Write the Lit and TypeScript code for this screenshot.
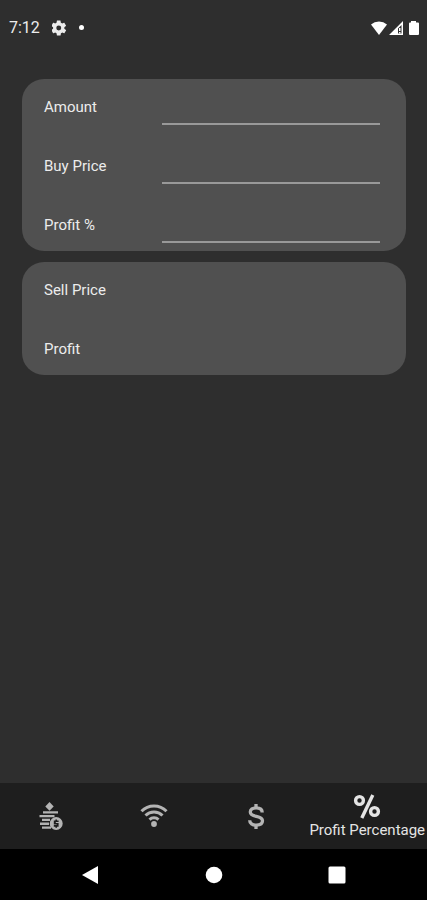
import { LitElement, html, css, svg } from "lit";
import { customElement, state } from "lit/decorators.js";

const moneyIcon = svg`
  <path d="M12.500 0l4.200 4.400-4.200 4.400-4.200-4.400z"/>
  <path d="M6 9.200h15v2.300H6zM2.500 13h15v2.300h-15zM5 16.800h8v2.300H5zM3 20.600h9v2.300H3zM5 24.400h9v2.300H5z"/>
  <path fill-rule="evenodd" d="M19.200 15a6.500 6.500 0 1 0 0 13a6.500 6.500 0 1 0 0-13zM18.400 17.400h1.600v1h1.600v1.600h-2.800v.9h2.800v3.800h-1.600v1h-1.600v-1h-1.600v-1.600h2.900v-.7h-2.900v-4h1.600z"/>`;

const wifiIcon = svg`
  <g fill="none" stroke="currentColor" stroke-width="3">
    <path d="M1.500 9.200a17.500 17.500 0 0 1 25 0"/>
    <path d="M5.500 13.500a12 12 0 0 1 17 0"/>
    <path d="M9.500 17.600a6.500 6.500 0 0 1 9 0"/>
  </g>
  <circle cx="14" cy="22" r="2.900"/>`;

const dollarIcon = svg`
  <g fill="none" stroke="currentColor" stroke-width="3.300">
    <path d="M14 2v4.500M14 22v5"/>
    <path d="M20.200 10.400c0-3-2.300-4.600-6-4.600-3.600 0-5.900 1.700-5.900 4.200 0 6 12.200 2.600 12.200 8.800 0 2.700-2.500 4.300-6.200 4.300-4 0-6.600-1.800-6.600-4.900"/>
  </g>`;

const percentIcon = svg`
  <g fill="none" stroke="currentColor" stroke-width="3.400">
    <circle cx="6.500" cy="8.500" r="3.900"/>
    <circle cx="21.500" cy="19.500" r="3.900"/>
    <path d="M19.800 3L8.800 26"/>
  </g>`;

const tabs = [
  { label: "Money", icon: moneyIcon },
  { label: "Signal", icon: wifiIcon },
  { label: "Dollar", icon: dollarIcon },
  { label: "Profit Percentage", icon: percentIcon },
];

@customElement("app-root")
export class AppRoot extends LitElement {
  @state() private active = 3;

  static styles = css`
    :host {
      display: flex;
      flex-direction: column;
      min-height: 100vh;
      background: #2e2e2e;
      color: #ececec;
      font-family: Roboto, sans-serif;
      font-size: 15px;
      line-height: 20px;
    }
    svg {
      display: block;
      fill: currentColor;
    }
    .status {
      display: flex;
      align-items: center;
      justify-content: space-between;
      height: 55px;
      padding: 0 6px 0 9px;
      font-size: 16px;
    }
    .group {
      display: flex;
      align-items: center;
    }
    .left {
      gap: 12px;
    }
    .right {
      gap: 2px;
      color: #fff;
    }
    .dot {
      width: 5px;
      height: 5px;
      border-radius: 50%;
      background: #fff;
    }
    main {
      display: flex;
      flex: 1;
      flex-direction: column;
      gap: 11px;
      padding: 24px 21px 24px 22px;
    }
    .card {
      display: flex;
      flex-direction: column;
      gap: 13px;
      padding: 0 26px 8px 22px;
      border-radius: 22px;
      background: #505050;
    }
    .row {
      display: flex;
      align-items: flex-end;
      height: 46px;
    }
    .name {
      width: 118px;
      margin-bottom: 8px;
    }
    .field {
      box-sizing: border-box;
      flex: 1;
      min-width: 0;
      height: 46px;
      padding: 10px 4px 0;
      border: 0;
      border-bottom: 2px solid #999;
      outline: 0;
      background: none;
      color: inherit;
      font: inherit;
    }
    .tabs {
      display: flex;
      height: 66px;
      background: #1e1e1e;
    }
    .tab {
      display: flex;
      flex: 1;
      flex-direction: column;
      align-items: center;
      justify-content: center;
      padding: 0;
      border: 0;
      background: none;
      color: #b4b4b4;
      font: inherit;
      white-space: nowrap;
    }
    .tab.active {
      flex: 0 0 28%;
      color: #e4e4e4;
    }
    .system {
      display: grid;
      grid-template-columns: repeat(3, 1fr);
      height: 51px;
      padding: 0 29px;
      background: #000;
    }
    .key {
      display: flex;
      align-items: center;
      justify-content: center;
      padding: 0;
      border: 0;
      background: none;
      color: #fff;
    }
  `;

  private field(id: string, label: string) {
    return html`<div class="row">
      <label class="name" for=${id}>${label}</label>
      <input class="field" id=${id} type="text" inputmode="decimal" />
    </div>`;
  }

  private result(label: string) {
    return html`<div class="row">
      <span class="name">${label}</span><output></output>
    </div>`;
  }

  render() {
    return html`
      <header class="status">
        <div class="group left">
          <span>7:12</span>
          <svg width="15" height="16" viewBox="3 2 20 20" aria-hidden="true">
            <path fill-rule="evenodd" d="M19.400 13c0-.3.100-.6.100-1s0-.7-.1-1l2.100-1.600c.2-.2.200-.4.100-.6l-2-3.500c-.1-.2-.4-.3-.6-.2l-2.500 1c-.5-.4-1.100-.7-1.700-1l-.4-2.600c0-.3-.2-.5-.4-.5h-4c-.3 0-.5.200-.5.400l-.4 2.700c-.6.300-1.200.6-1.700 1l-2.500-1c-.2-.1-.5 0-.6.200l-2 3.500c-.1.200-.1.500.1.600L4.500 11c0 .300-.1.700-.1 1s0 .700.1 1l-2.100 1.600c-.2.200-.2.400-.1.600l2 3.500c.1.200.4.300.6.200l2.500-1c.5.400 1.100.7 1.700 1l.4 2.600c0 .300.200.500.500.500h4c.2 0 .4-.2.500-.4l.4-2.700c.6-.3 1.200-.6 1.700-1l2.500 1c.2.100.5 0 .6-.2l2-3.500c.1-.2.100-.5-.1-.6zM12 15.300a3.300 3.300 0 1 1 0-6.600a3.300 3.300 0 1 1 0 6.600z"/>
          </svg>
          <span class="dot"></span>
        </div>
        <div class="group right">
          <svg width="16" height="14" viewBox="0 0 16 14" aria-hidden="true">
            <path d="M0 3.500a12 12 0 0 1 16 0L8 14z"/>
          </svg>
          <svg width="14" height="14" viewBox="0 0 14 14" aria-hidden="true">
            <path fill-rule="evenodd" d="M14 0v14H0zM12.500 4L9 7.500v5h3.500z"/>
            <path d="M10 7h1.500v3H10zM10 11h1.500v1.500H10z"/>
          </svg>
          <svg width="16" height="14" viewBox="0 0 16 14" aria-hidden="true">
            <path d="M6 0h5v1.500h2a1 1 0 0 1 1 1V13a1 1 0 0 1-1 1H5a1 1 0 0 1-1-1V2.500a1 1 0 0 1 1-1h1z"/>
          </svg>
        </div>
      </header>
      <main>
        <form class="card">
          ${this.field("amount", "Amount")}
          ${this.field("buy", "Buy Price")}
          ${this.field("percent", "Profit %")}
        </form>
        <section class="card">
          ${this.result("Sell Price")} ${this.result("Profit")}
        </section>
      </main>
      <nav class="tabs">
        ${tabs.map(
          (tab, i) => html`<button
            class="tab ${i === this.active ? "active" : ""}"
            aria-label=${tab.label}
            @click=${() => (this.active = i)}
          >
            <svg width="28" height="28" viewBox="0 0 28 28" aria-hidden="true">${tab.icon}</svg>
            ${i === this.active ? html`<span>${tab.label}</span>` : ""}
          </button>`
        )}
      </nav>
      <footer class="system">
        <button class="key" aria-label="Back">
          <svg width="18" height="20" viewBox="1 0 18 20"><path d="M17 1v18L1 10z"/></svg>
        </button>
        <button class="key" aria-label="Home">
          <svg width="18" height="18" viewBox="0 0 18 18"><circle cx="9" cy="9" r="8.300"/></svg>
        </button>
        <button class="key" aria-label="Recents">
          <svg width="18" height="18" viewBox="0 0 18 18"><rect x=".5" y=".5" width="17" height="17" rx="1.500"/></svg>
        </button>
      </footer>
    `;
  }
}
